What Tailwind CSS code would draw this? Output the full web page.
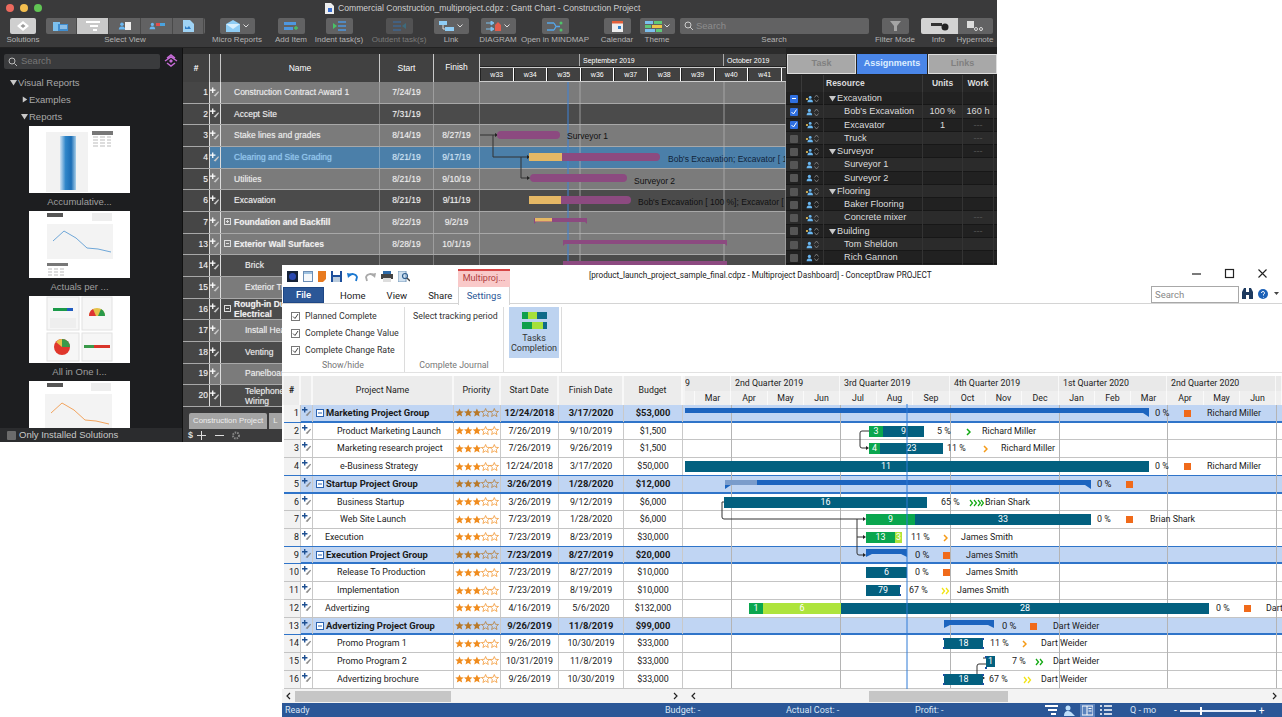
<!DOCTYPE html>
<html><head><meta charset="utf-8"><title>ConceptDraw PROJECT</title>
<script src="https://cdn.jsdelivr.net/npm/@tailwindcss/browser@4"></script></head>
<body class="bg-white">
<svg width="0" height="0" class="absolute">
<defs>
<linearGradient id="gb" x1="0" x2="1" y1="0" y2="0"><stop offset="0" stop-color="#cfe3f4"/><stop offset=".35" stop-color="#2f86c9"/><stop offset=".7" stop-color="#1b6db5"/><stop offset="1" stop-color="#a8cfe9"/></linearGradient>
<symbol id="rd" viewBox="0 0 11 11"><path d="M3 0v6M0 3h6" stroke="#fff" stroke-width="1.400"/><path d="M4 9l5-5 1 1-4 5z" fill="#c8c8c8"/></symbol>
<symbol id="rl" viewBox="0 0 11 11"><path d="M3 0v6M0 3h6" stroke="#1d4f91" stroke-width="1.500"/><path d="M4 9l5-5 1 1-4 5z" fill="#8a8a8a"/></symbol>
<symbol id="st" viewBox="0 0 44 10"><g fill="#f08c1e"><path id="s1" d="M4.500 0.500l1.200 2.800 3 .2-2.300 2 .8 3-2.700-1.600-2.700 1.600.8-3-2.300-2 3-.2z"/><use href="#s1" x="8.700"/><use href="#s1" x="17.400"/></g><g fill="none" stroke="#f08c1e" stroke-width=".7"><use href="#s1" x="26.100"/><use href="#s1" x="34.800"/></g></symbol>
<symbol id="sg" viewBox="0 0 44 10"><g fill="#b8792a"><path id="s2" d="M4.500 0.500l1.200 2.800 3 .2-2.300 2 .8 3-2.700-1.600-2.700 1.600.8-3-2.300-2 3-.2z"/><use href="#s2" x="8.700"/><use href="#s2" x="17.400"/></g><g fill="none" stroke="#b8792a" stroke-width=".7"><use href="#s2" x="26.100"/><use href="#s2" x="34.800"/></g></symbol>
<symbol id="mn" viewBox="0 0 8 8"><rect x=".5" y=".5" width="7" height="7" fill="#fff" stroke="#2a62b0"/><path d="M2 4h4" stroke="#2a62b0"/></symbol>
<symbol id="pr" viewBox="0 0 5 9"><path d="M.5 3.500L2.500 1l2 2.500M.5 5.500l2 2.500 2-2.500" fill="none" stroke="#8a8a8a" stroke-width=".8"/></symbol>
<symbol id="pe" viewBox="0 0 10 10"><circle cx="5.500" cy="3" r="2" fill="#69b7f2"/><path d="M2 9c0-3 2-3.500 3.500-3.500S9 6 9 9z" fill="#69b7f2"/></symbol>
<symbol id="pg" viewBox="0 0 10 10"><circle cx="6.500" cy="3" r="1.800" fill="#69b7f2"/><path d="M3 9c0-3 2-3.500 3.500-3.500S10 6 10 9z" fill="#69b7f2"/><circle cx="2.500" cy="5" r="1.400" fill="#e8c25a"/></symbol>
<symbol id="tm" viewBox="0 0 8 8"><path d="M0 1h8L4 7.500z" fill="#c8c8c8"/></symbol>
<symbol id="ti" viewBox="0 0 8 8"><path d="M1 0v8l6-4z" fill="#c8c8c8"/></symbol>
</defs></svg>

<div class="relative w-[1282px] h-[717px] overflow-hidden bg-white [font-family:'Liberation_Sans',Arial,sans-serif]">

<!-- MAC WINDOW -->
<div class="absolute left-0 top-0 w-[997px] h-[442px] bg-[#1d1e20] flex flex-col overflow-hidden">
  <div class="h-[48px] shrink-0 bg-[#3a3a3b] border-b border-[#222] relative">
    <div class="h-[16px] flex items-center relative">
      <div class="flex gap-[6px] ml-[6px]"><span class="w-[8px] h-[8px] rounded-full bg-[#ec6a5e]"></span><span class="w-[8px] h-[8px] rounded-full bg-[#f4bf4f]"></span><span class="w-[8px] h-[8px] rounded-full bg-[#61c554]"></span></div>
      <svg class="ml-[283px]" width="9" height="11" viewBox="0 0 9 11"><path d="M0 0h6l3 3v8H0z" fill="#eee"/><rect x="3" y="5" width="4" height="4" fill="#3a6fd0"/></svg>
      <div class="ml-[4px] text-[8.600px] text-[#cfcfcf] whitespace-nowrap">Commercial Construction_multiproject.cdpz : Gantt Chart - Construction Project</div>
    </div>
    <div class="flex text-[8px] text-[#b4b4b4] whitespace-nowrap *:flex *:flex-col *:items-center *:h-[30px] *:justify-between">
      <div class="w-[46px]"><div class="w-[26px] h-[16px] mt-[2px] rounded-[2px] bg-[#cfcfcf] flex items-center justify-center"><svg width="12" height="11" viewBox="0 0 12 11"><path d="M6 0l6 5-6 5-6-5z" fill="#fff"/><path d="M6 3l2.500 2-2.500 2-2.500-2z" fill="#999"/></svg></div><span>Solutions</span></div>
      <div class="w-[158px]"><div class="w-[159px] h-[16px] mt-[2px] rounded-[2px] bg-[#626263] flex *:flex-1 *:flex *:items-center *:justify-center *:border-r *:border-[#4a4a4a]">
        <div><svg width="15" height="11" viewBox="0 0 15 11"><rect x="0" y="1" width="7" height="9" fill="#7cc0ee"/><rect x="5" y="3" width="10" height="7" fill="#3f8dd0"/><path d="M7 5h7M7 7h7" stroke="#d9eefc"/></svg></div>
        <div class="bg-[#c9c9c9]"><svg width="14" height="10" viewBox="0 0 14 10"><path d="M0 1h14M4 5h8M7 9h4" stroke="#fff" stroke-width="2"/></svg></div>
        <div><svg width="14" height="10" viewBox="0 0 14 10"><use href="#pe" width="9" height="10"/><rect x="8" y="1" width="6" height="8" fill="#eee"/></svg></div>
        <div><svg width="17" height="10" viewBox="0 0 17 10"><use href="#pe" width="8" height="10"/><rect x="8" y="2" width="4" height="3" fill="#e24b4b"/><rect x="12" y="2" width="5" height="3" fill="#4aa3df"/></svg></div>
        <div class="border-r-0"><svg width="11" height="12" viewBox="0 0 11 12"><path d="M0 0h7l4 4v8H0z" fill="#9fd3f5"/><path d="M2 6l2 2 2-2 2 3H2z" fill="#2f7fc8"/></svg></div>
      </div><span>Select View</span></div>
      <div class="w-[66px]"><div class="w-[35px] h-[16px] mt-[2px] rounded-[2px] bg-[#626263] flex items-center justify-center gap-[3px]"><svg width="14" height="12" viewBox="0 0 14 12"><path d="M0 4l7-4 7 4v8H0z" fill="#8fcdf5"/><path d="M0 4l7 5 7-5" fill="#d8effd"/></svg><svg width="6" height="4" viewBox="0 0 6 4"><path d="M.5.500L3 3 5.500.500" stroke="#ddd" fill="none"/></svg></div><span>Micro Reports</span></div>
      <div class="w-[42px]"><div class="w-[27px] h-[16px] mt-[2px] rounded-[2px] bg-[#626263] flex items-center justify-center"><svg width="14" height="10" viewBox="0 0 14 10"><rect y="1" width="12" height="3" fill="#4e97e0"/><rect y="6" width="9" height="3" fill="#4e97e0"/><path d="M10 7h4M12 5v4" stroke="#49c266" stroke-width="1.300"/></svg></div><span>Add Item</span></div>
      <div class="w-[54px]"><div class="w-[27px] h-[16px] mt-[2px] rounded-[2px] bg-[#626263] flex items-center justify-center"><svg width="13" height="10" viewBox="0 0 13 10"><path d="M0 2l4 3-4 3z" fill="#49c266"/><path d="M5 1h8M5 5h8M5 9h8" stroke="#4e97e0" stroke-width="1.400"/></svg></div><span>Indent task(s)</span></div>
      <div class="w-[66px] text-[#7a7a7a]"><div class="w-[27px] h-[16px] mt-[2px] rounded-[2px] bg-[#525253] flex items-center justify-center"><svg width="13" height="10" viewBox="0 0 13 10"><path d="M13 2L9 5l4 3z" fill="#3d6b7d"/><path d="M0 1h8M0 5h8M0 9h8" stroke="#3f6590" stroke-width="1.400"/></svg></div><span>Outdent task(s)</span></div>
      <div class="w-[38px]"><div class="w-[35px] h-[16px] mt-[2px] rounded-[2px] bg-[#626263] flex items-center justify-center gap-[3px]"><svg width="15" height="10" viewBox="0 0 15 10"><rect width="8" height="4" fill="#8fcdf5"/><rect x="6" y="6" width="9" height="4" fill="#8fcdf5"/><path d="M4 4v4h2" stroke="#ddd" fill="none"/></svg><svg width="6" height="4" viewBox="0 0 6 4"><path d="M.5.500L3 3 5.500.500" stroke="#ddd" fill="none"/></svg></div><span>Link</span></div>
      <div class="w-[56px]"><div class="w-[35px] h-[16px] mt-[2px] rounded-[2px] bg-[#626263] flex items-center justify-center gap-[3px]"><svg width="15" height="11" viewBox="0 0 15 11"><path d="M0 2h6M0 8h6M5 0l3 2-3 2zM5 6l3 2-3 2z" stroke="#7cc0ee" fill="#7cc0ee"/><path d="M9 10V4l3-3 3 3v6z" fill="#e25c4c"/></svg><svg width="6" height="4" viewBox="0 0 6 4"><path d="M.5.500L3 3 5.500.500" stroke="#ddd" fill="none"/></svg></div><span>DIAGRAM</span></div>
      <div class="w-[58px]"><div class="w-[27px] h-[16px] mt-[2px] rounded-[2px] bg-[#626263] flex items-center justify-center"><svg width="16" height="11" viewBox="0 0 16 11"><path d="M0 2h7M0 9h7M7 2l2 3.500-2 3.500M9 5.500h4" stroke="#55a6e8" stroke-width="1.300" fill="none"/><circle cx="14" cy="2" r="1.500" fill="#4fc46a"/><circle cx="14" cy="9" r="1.500" fill="#4fc46a"/></svg></div><span>Open in MINDMAP</span></div>
      <div class="w-[46px] ml-[10px]"><div class="w-[27px] h-[16px] mt-[2px] rounded-[2px] bg-[#626263] flex items-center justify-center"><svg width="11" height="11" viewBox="0 0 11 11"><rect width="11" height="11" fill="#eee"/><rect width="11" height="2.500" fill="#e4603a"/><rect x="6" y="5" width="3" height="3" fill="#2f7fc8"/></svg></div><span>Calendar</span></div>
      <div class="w-[34px]"><div class="w-[35px] h-[16px] mt-[2px] rounded-[2px] bg-[#626263] flex items-center justify-center gap-[2px]"><svg width="17" height="11" viewBox="0 0 17 11"><rect width="8" height="3" fill="#7cc0ee"/><rect x="9" width="8" height="3" fill="#5fc878"/><rect y="4" width="6" height="3" fill="#5fc878"/><rect x="7" y="4" width="10" height="3" fill="#eec548"/><rect y="8" width="10" height="3" fill="#7cc0ee"/><rect x="11" y="8" width="6" height="3" fill="#5fc878"/></svg><svg width="6" height="4" viewBox="0 0 6 4"><path d="M.5.500L3 3 5.500.500" stroke="#ddd" fill="none"/></svg></div><span>Theme</span></div>
      <div class="w-[200px]"><div class="w-[189px] h-[16px] mt-[2px] rounded-[2px] bg-[#626263] flex items-center pl-[4px] gap-[1px] text-[9.500px] text-[#8d8d8d] self-start ml-[6px]"><svg width="11" height="10" viewBox="0 0 11 10"><circle cx="4" cy="4" r="3" stroke="#ccc" fill="none"/><path d="M6 6l3 3" stroke="#ccc"/></svg>Search</div><span>Search</span></div>
      <div class="w-[42px]"><div class="w-[27px] h-[16px] mt-[2px] rounded-[2px] bg-[#626263] flex items-center justify-center"><svg width="11" height="10" viewBox="0 0 11 10"><path d="M0 0h11L7 5v5H4V5z" fill="#a5a5a5"/></svg></div><span>Filter Mode</span></div>
      <div class="w-[42px] items-end!"><div class="w-[37px] h-[16px] mt-[2px] rounded-l-[2px] bg-[#d3d3d3] flex items-center justify-center"><svg width="18" height="9" viewBox="0 0 18 9"><rect y="1" width="11" height="3" fill="#333"/><circle cx="14" cy="5" r="3.500" fill="#222"/></svg></div><span class="mr-[13px]">Info</span></div>
      <div class="w-[34px]"><div class="w-[35px] h-[16px] mt-[2px] rounded-r-[2px] bg-[#626263] flex items-center justify-center"><svg width="16" height="10" viewBox="0 0 16 10"><rect width="7" height="7" fill="#ddd"/><circle cx="9" cy="8" r="1.500" stroke="#ddd" fill="none"/><circle cx="14" cy="8" r="1.500" stroke="#ddd" fill="none"/></svg></div><span>Hypernote</span></div>
    </div>
  </div>

  <div class="flex flex-1 min-h-0">
    <!-- SIDEBAR -->
    <aside class="w-[183px] shrink-0 flex flex-col bg-[#1d1e20] border-r border-[#111] text-[#b0b0b0]">
      <div class="relative h-[20px] mt-[6px]">
        <div class="ml-[4px] w-[156px] h-[15px] rounded-[2px] bg-[#3a3b3d] flex items-center pl-[4px] gap-[3px] text-[9.500px] text-[#777]"><svg width="10" height="10" viewBox="0 0 10 10"><circle cx="4" cy="4" r="3" stroke="#bbb" fill="none"/><path d="M6.500 6.500L9 9" stroke="#bbb"/></svg>Search</div>
        <svg class="absolute left-[164px] top-0" width="14" height="14" viewBox="0 0 14 14" fill="none" stroke="#c56bd6" stroke-width="1.500"><path d="M3 4l4-3 4 3M1 7l6-4 6 4M3 9l4 3 4-3"/><path d="M7 5l2 2-2 2-2-2z" fill="#c56bd6" stroke="none"/></svg>
      </div>
      <div class="flex-1 overflow-hidden text-[9.500px] leading-[17px]">
        <div class="flex items-center gap-[1px] pl-[10px] text-[#a8a8a8]"><svg width="7" height="7"><use href="#tm"/></svg>Visual Reports</div>
        <div class="flex items-center gap-[1px] pl-[22px] text-[#a8a8a8]"><svg width="6" height="7"><use href="#ti"/></svg>Examples</div>
        <div class="flex items-center gap-[1px] pl-[21px] text-[#a8a8a8]"><svg width="7" height="7"><use href="#tm"/></svg>Reports</div>
        <div class="pl-[29px] mt-[1px] flex flex-col *:w-[101px] text-[#9f9f9f]">
          <div class="h-[67px] bg-white"><svg width="101" height="67" viewBox="0 0 101 67"><rect x="17" y="6" width="42" height="60" fill="#f2f2f2"/><rect x="31" y="10" width="16" height="54" fill="url(#gb)"/><rect x="63" y="5" width="21" height="4" fill="#777"/><path d="M64 11h18M64 14h18M64 17h18M64 20h18" stroke="#bbb" stroke-dasharray="5 2"/></svg></div>
          <div class="h-[18px] text-center leading-[17px]">Accumulative...</div>
          <div class="h-[67px] bg-white"><svg width="101" height="67" viewBox="0 0 101 67"><rect x="18" y="13" width="66" height="35" fill="#f3f3f3"/><path d="M24 30l11-10 12 7 11 10 11 1 13 3" stroke="#6fa7d8" fill="none"/><rect x="18" y="2" width="16" height="4" fill="#555"/><rect x="63" y="2" width="20" height="8" fill="#eee"/><rect x="18" y="52" width="21" height="3" fill="#777"/><path d="M19 58h18M19 61h18M19 64h18" stroke="#bbb" stroke-dasharray="4 2"/></svg></div>
          <div class="h-[18px] text-center leading-[17px]">Actuals per ...</div>
          <div class="h-[67px] bg-white"><svg width="101" height="67" viewBox="0 0 101 67"><rect x="18" y="1" width="32" height="33" fill="#f6f6f6" stroke="#e2e2e2"/><rect x="24" y="12" width="20" height="3" fill="#1b9a49"/><rect x="38" y="12" width="6" height="3" fill="#1f5cc0"/><rect x="21" y="22" width="26" height="10" fill="#eee"/><rect x="53" y="1" width="30" height="33" fill="#f6f6f6" stroke="#e2e2e2"/><path d="M60 20a8 8 0 0 1 16 0z" fill="#e5c24a"/><path d="M60 20a8 8 0 0 1 4-7l3 7z" fill="#d33"/><path d="M76 20a8 8 0 0 0-4-7l-3 7z" fill="#2a9a4a"/><rect x="18" y="37" width="32" height="28" fill="#f6f6f6" stroke="#e2e2e2"/><circle cx="33" cy="51" r="8" fill="#e0372c"/><path d="M33 51V43a8 8 0 0 1 8 8z" fill="#3a9a4a"/><path d="M33 51V43a8 8 0 0 0-6 3z" fill="#e5c24a"/><rect x="53" y="37" width="30" height="28" fill="#f6f6f6" stroke="#e2e2e2"/><rect x="55" y="49" width="26" height="3" fill="#d9352b"/><rect x="55" y="49" width="10" height="3" fill="#3a9a4a"/></svg></div>
          <div class="h-[18px] text-center leading-[17px]">All in One I...</div>
          <div class="h-[67px] bg-white"><svg width="101" height="48" viewBox="0 0 101 48"><rect x="18" y="2" width="16" height="4" fill="#555"/><rect x="62" y="2" width="20" height="8" fill="#eee"/><rect x="16" y="13" width="67" height="35" fill="#f3f3f3"/><path d="M22 32l11-10 12 7 11 10 11 1 13 3" stroke="#f2a45e" fill="none"/></svg></div>
        </div>
      </div>
      <div class="h-[14px] shrink-0 bg-[#2b2c2e] flex items-center gap-[3px] pl-[7px] text-[9.500px] text-[#c8c8c8]"><span class="w-[9px] h-[9px] bg-[#6b6b6b] rounded-[1px]"></span>Only Installed Solutions</div>
    </aside>

    <!-- MAC GANTT -->
    <section class="w-[603px] shrink-0 bg-[#2c2c2c] pt-[6px] flex flex-col text-white">
      <div class="grid grid-cols-[27px_11px_159px_54px_46px_1fr] h-[28px] bg-[#414141] text-[8.500px] *:border-r *:border-[#c8c8c8] *:flex *:items-center *:justify-center">
        <div class="font-bold">#</div><div></div><div>Name</div><div>Start</div><div class="pb-[2px]">Finish</div>
        <div class="flex-col! border-r-0! items-stretch! justify-stretch! text-[7px]">
          <div class="h-[13px] flex text-left leading-[13px] border-b border-[#222]"><div class="w-[100px] border-r border-[#aaa]"></div><div class="w-[144px] pl-[3px] border-r border-[#aaa]">September 2019</div><div class="pl-[3px]">October 2019</div></div>
          <div class="h-[15px] flex *:w-[33.500px] *:text-center *:leading-[14px] *:border-r *:border-white *:border-l *:border-l-[#222] border-y border-[#ccc]"><div>w33</div><div>w34</div><div>w35</div><div>w36</div><div>w37</div><div>w38</div><div>w39</div><div>w40</div><div>w41</div></div>
        </div>
      </div>
      <div class="text-[8.500px] [text-shadow:0_0_1px_rgba(255,255,255,0.45)] *:grid *:grid-cols-[27px_11px_159px_54px_46px_1fr] *:h-[21.670px] *:border-b *:border-[#a8a8a8] *:items-center *:*:h-full *:*:flex *:*:items-center *:*:border-r *:*:border-[#ffffff44] text-[#eee]">
        <div class="bg-[#7b7b7b]"><div class="bg-[#464646] justify-end pr-[1px] border-[#ddd]!">1</div><div class="border-[#ddd]!"><svg width="11" height="11"><use href="#rd"/></svg></div><div class="pl-[13px] whitespace-nowrap">Construction Contract Award 1</div><div class="justify-center">7/24/19</div><div></div><div class="border-r-0 relative"></div></div>
        <div class="bg-[#4b4b4b]"><div class="bg-[#464646] justify-end pr-[1px] border-[#ddd]!">2</div><div class="border-[#ddd]!"><svg width="11" height="11"><use href="#rd"/></svg></div><div class="pl-[13px]">Accept Site</div><div class="justify-center">7/31/19</div><div></div><div class="border-r-0 relative"></div></div>
        <div class="bg-[#7b7b7b]"><div class="bg-[#464646] justify-end pr-[1px] border-[#ddd]!">3</div><div class="border-[#ddd]!"><svg width="11" height="11"><use href="#rd"/></svg></div><div class="pl-[13px]">Stake lines and grades</div><div class="justify-center">8/14/19</div><div class="justify-center">8/27/19</div><div class="border-r-0 relative"><span class="absolute left-[87px] top-[5px] z-10 [text-shadow:none] text-[#111]">Surveyor 1</span></div></div>
        <div class="bg-[#4b7fa9]"><div class="bg-[#464646] justify-end pr-[1px] border-[#ddd]!">4</div><div class="border-[#ddd]!"><svg width="11" height="11"><use href="#rd"/></svg></div><div class="pl-[13px] text-[#8cc8f4]">Clearing and Site Grading</div><div class="justify-center text-[#cfe4f5]">8/21/19</div><div class="justify-center text-[#cfe4f5]">9/17/19</div><div class="border-r-0 relative overflow-hidden"><span class="absolute left-[188px] top-[6px] z-10 [text-shadow:none] text-[#10243a] whitespace-nowrap">Bob's Excavation; Excavator [ 1</span></div></div>
        <div class="bg-[#7b7b7b]"><div class="bg-[#464646] justify-end pr-[1px] border-[#ddd]!">5</div><div class="border-[#ddd]!"><svg width="11" height="11"><use href="#rd"/></svg></div><div class="pl-[13px]">Utilities</div><div class="justify-center">8/21/19</div><div class="justify-center">9/10/19</div><div class="border-r-0 relative"><span class="absolute left-[154px] top-[6px] z-10 [text-shadow:none] text-[#111]">Surveyor 2</span></div></div>
        <div class="bg-[#4b4b4b]"><div class="bg-[#464646] justify-end pr-[1px] border-[#ddd]!">6</div><div class="border-[#ddd]!"><svg width="11" height="11"><use href="#rd"/></svg></div><div class="pl-[13px]">Excavation</div><div class="justify-center">8/21/19</div><div class="justify-center">9/11/19</div><div class="border-r-0 relative overflow-hidden"><span class="absolute left-[158px] top-[6px] z-10 [text-shadow:none] text-[#111] whitespace-nowrap">Bob's Excavation [ 100 %]; Excavator [</span></div></div>
        <div class="bg-[#7b7b7b]"><div class="bg-[#464646] justify-end pr-[1px] border-[#ddd]!">7</div><div class="border-[#ddd]!"><svg width="11" height="11"><use href="#rd"/></svg></div><div class="pl-[3px] gap-[2px] font-bold"><svg width="8" height="8"><rect x=".5" y=".5" width="6" height="6" fill="none" stroke="#ddd"/><path d="M2 3.500h3M3.500 2v3" stroke="#ddd"/></svg>Foundation and Backfill</div><div class="justify-center">8/22/19</div><div class="justify-center">9/2/19</div><div class="border-r-0 relative"></div></div>
        <div class="bg-[#7b7b7b]"><div class="bg-[#464646] justify-end pr-[1px] border-[#ddd]!">13</div><div class="border-[#ddd]!"><svg width="11" height="11"><use href="#rd"/></svg></div><div class="pl-[3px] gap-[2px] font-bold"><svg width="8" height="8"><rect x=".5" y=".5" width="6" height="6" fill="none" stroke="#ddd"/><path d="M2 3.500h3" stroke="#ddd"/></svg>Exterior Wall Surfaces</div><div class="justify-center">8/28/19</div><div class="justify-center">10/1/19</div><div class="border-r-0 relative"></div></div>
        <div class="bg-[#4b4b4b]"><div class="bg-[#464646] justify-end pr-[1px] border-[#ddd]!">14</div><div class="border-[#ddd]!"><svg width="11" height="11"><use href="#rd"/></svg></div><div class="pl-[24px]">Brick</div><div class="justify-center"></div><div></div><div class="border-r-0 relative"></div></div>
        <div class="bg-[#7b7b7b]"><div class="bg-[#464646] justify-end pr-[1px] border-[#ddd]!">15</div><div class="border-[#ddd]!"><svg width="11" height="11"><use href="#rd"/></svg></div><div class="pl-[24px]">Exterior Trim</div><div></div><div></div><div class="border-r-0 relative"></div></div>
        <div class="bg-[#4b4b4b]"><div class="bg-[#464646] justify-end pr-[1px] border-[#ddd]!">16</div><div class="border-[#ddd]!"><svg width="11" height="11"><use href="#rd"/></svg></div><div class="pl-[3px] gap-[2px] leading-[10px] font-bold"><svg width="8" height="8"><rect x=".5" y=".5" width="6" height="6" fill="none" stroke="#ddd"/><path d="M2 3.500h3" stroke="#ddd"/></svg><span>Rough-in Duct<br>Electrical</span></div><div></div><div></div><div class="border-r-0 relative"></div></div>
        <div class="bg-[#7b7b7b]"><div class="bg-[#464646] justify-end pr-[1px] border-[#ddd]!">17</div><div class="border-[#ddd]!"><svg width="11" height="11"><use href="#rd"/></svg></div><div class="pl-[24px]">Install Heating</div><div></div><div></div><div class="border-r-0 relative"></div></div>
        <div class="bg-[#4b4b4b]"><div class="bg-[#464646] justify-end pr-[1px] border-[#ddd]!">18</div><div class="border-[#ddd]!"><svg width="11" height="11"><use href="#rd"/></svg></div><div class="pl-[24px]">Venting</div><div></div><div></div><div class="border-r-0 relative"></div></div>
        <div class="bg-[#7b7b7b]"><div class="bg-[#464646] justify-end pr-[1px] border-[#ddd]!">19</div><div class="border-[#ddd]!"><svg width="11" height="11"><use href="#rd"/></svg></div><div class="pl-[24px]">Panelboard</div><div></div><div></div><div class="border-r-0 relative"></div></div>
        <div class="bg-[#4b4b4b]"><div class="bg-[#464646] justify-end pr-[1px] border-[#ddd]!">20</div><div class="border-[#ddd]!"><svg width="11" height="11"><use href="#rd"/></svg></div><div class="pl-[24px] leading-[10px]"><span>Telephone<br>Wiring</span></div><div></div><div></div><div class="border-r-0 relative"></div></div>
      </div>
      <div class="flex-1 bg-[#3b3b3c] pt-[6px] pl-[6px] flex flex-col">
        <div class="flex gap-[2px] h-[16px] text-[7.800px] text-[#eee] items-center"><span class="bg-[#a4a4a4] px-[4px] leading-[16px] whitespace-nowrap rounded-t-[2px]">Construction Project</span><span class="bg-[#a4a4a4] px-[4px] leading-[16px]">L</span></div>
        <div class="flex-1 flex items-center gap-[4px] text-[#ddd] text-[9px] font-bold -ml-[1px]"><span>$</span><svg width="9" height="9"><path d="M4.500 0v9M0 4.500h9" stroke="#ddd"/></svg><svg class="ml-[5px]" width="9" height="9"><path d="M0 4.500h9" stroke="#ddd"/></svg><svg class="ml-[3px]" width="10" height="9" viewBox="0 0 10 9"><circle cx="5" cy="4.500" r="3" fill="none" stroke="#888" stroke-width="2" stroke-dasharray="1.500 1"/></svg></div>
      </div>
    </section>

    <!-- RIGHT PANEL -->
    <section class="w-[211px] shrink-0 bg-[#222] text-[#ddd] text-[9.200px] pt-[6px]">
      <div class="flex gap-px h-[20px] pl-px items-stretch text-[9px] font-bold text-[#808080] *:flex *:items-center *:justify-center *:border *:border-[#ddd]">
        <div class="w-[69px] bg-[#a8a8a8]">Task</div><div class="w-[70px] bg-[#4a86e8] text-[#ddeeff] border-[#4a86e8]!">Assignments</div><div class="w-[69px] bg-[#a8a8a8]">Links</div>
      </div>
      <div class="mt-[1px] h-[17px] grid grid-cols-[16px_22px_99px_40px_31px] bg-[#262626] text-[8.500px] font-bold items-center *:border-r *:border-[#3a3a3a] *:h-full *:flex *:items-center"><div></div><div></div><div class="pl-[2px]">Resource</div><div class="justify-center">Units</div><div class="justify-center">Work</div></div>
      <div class="*:grid *:grid-cols-[16px_22px_99px_40px_31px] *:h-[13.250px] *:items-center *:*:h-full *:*:flex *:*:items-center *:*:border-r *:*:border-[#333] *:even:bg-[#2b2b2b] *:odd:bg-[#212121] *:border-b *:border-[#171717]">
        <div><div class="justify-center"><span class="w-[8px] h-[8px] rounded-[1px] bg-[#2f6fe0] flex items-center justify-center"><span class="w-[4px] h-[1px] bg-white"></span></span></div><div class="gap-[1px] pl-[3px]"><svg width="8" height="8"><use href="#pg"/></svg><svg width="5" height="9"><use href="#pr"/></svg></div><div class="pl-[5px] gap-[1px]"><svg width="7" height="7"><use href="#tm"/></svg>Excavation</div><div></div><div></div></div>
        <div><div class="justify-center"><span class="w-[8px] h-[8px] rounded-[1px] bg-[#2f6fe0] flex items-center justify-center"><svg width="6" height="6" viewBox="0 0 6 6"><path d="M.5 3l2 2L5.500.500" stroke="#fff" fill="none"/></svg></span></div><div class="gap-[1px] pl-[3px]"><svg width="8" height="8"><use href="#pe"/></svg><svg width="5" height="9"><use href="#pr"/></svg></div><div class="pl-[20px]">Bob's Excavation</div><div class="justify-center">100 %</div><div class="justify-center">160 h</div></div>
        <div><div class="justify-center"><span class="w-[8px] h-[8px] rounded-[1px] bg-[#2f6fe0] flex items-center justify-center"><svg width="6" height="6" viewBox="0 0 6 6"><path d="M.5 3l2 2L5.500.500" stroke="#fff" fill="none"/></svg></span></div><div class="gap-[1px] pl-[3px]"><svg width="8" height="8"><use href="#pg"/></svg><svg width="5" height="9"><use href="#pr"/></svg></div><div class="pl-[20px]">Excavator</div><div class="justify-center">1</div><div class="justify-center text-[#555]">---</div></div>
        <div><div class="justify-center"><span class="w-[8px] h-[8px] rounded-[1px] bg-[#555]"></span></div><div class="gap-[1px] pl-[3px]"><svg width="8" height="8"><use href="#pg"/></svg><svg width="5" height="9"><use href="#pr"/></svg></div><div class="pl-[20px]">Truck</div><div></div><div class="justify-center text-[#555]">---</div></div>
        <div><div class="justify-center"><span class="w-[8px] h-[8px] rounded-[1px] bg-[#555]"></span></div><div class="gap-[1px] pl-[3px]"><svg width="8" height="8"><use href="#pg"/></svg><svg width="5" height="9"><use href="#pr"/></svg></div><div class="pl-[5px] gap-[1px]"><svg width="7" height="7"><use href="#tm"/></svg>Surveyor</div><div></div><div class="justify-center text-[#555]">---</div></div>
        <div><div class="justify-center"><span class="w-[8px] h-[8px] rounded-[1px] bg-[#555]"></span></div><div class="gap-[1px] pl-[3px]"><svg width="8" height="8"><use href="#pe"/></svg><svg width="5" height="9"><use href="#pr"/></svg></div><div class="pl-[20px]">Surveyor 1</div><div></div><div></div></div>
        <div><div class="justify-center"><span class="w-[8px] h-[8px] rounded-[1px] bg-[#555]"></span></div><div class="gap-[1px] pl-[3px]"><svg width="8" height="8"><use href="#pe"/></svg><svg width="5" height="9"><use href="#pr"/></svg></div><div class="pl-[20px]">Surveyor 2</div><div></div><div></div></div>
        <div><div class="justify-center"><span class="w-[8px] h-[8px] rounded-[1px] bg-[#555]"></span></div><div class="gap-[1px] pl-[3px]"><svg width="8" height="8"><use href="#pg"/></svg><svg width="5" height="9"><use href="#pr"/></svg></div><div class="pl-[5px] gap-[1px]"><svg width="7" height="7"><use href="#tm"/></svg>Flooring</div><div></div><div></div></div>
        <div><div class="justify-center"><span class="w-[8px] h-[8px] rounded-[1px] bg-[#555]"></span></div><div class="gap-[1px] pl-[3px]"><svg width="8" height="8"><use href="#pe"/></svg><svg width="5" height="9"><use href="#pr"/></svg></div><div class="pl-[20px]">Baker Flooring</div><div></div><div></div></div>
        <div><div class="justify-center"><span class="w-[8px] h-[8px] rounded-[1px] bg-[#555]"></span></div><div class="gap-[1px] pl-[3px]"><svg width="8" height="8"><use href="#pg"/></svg><svg width="5" height="9"><use href="#pr"/></svg></div><div class="pl-[20px]">Concrete mixer</div><div></div><div class="justify-center text-[#555]">---</div></div>
        <div><div class="justify-center"><span class="w-[8px] h-[8px] rounded-[1px] bg-[#555]"></span></div><div class="gap-[1px] pl-[3px]"><svg width="8" height="8"><use href="#pg"/></svg><svg width="5" height="9"><use href="#pr"/></svg></div><div class="pl-[5px] gap-[1px]"><svg width="7" height="7"><use href="#tm"/></svg>Building</div><div></div><div class="justify-center text-[#555]">---</div></div>
        <div><div class="justify-center"><span class="w-[8px] h-[8px] rounded-[1px] bg-[#555]"></span></div><div class="gap-[1px] pl-[3px]"><svg width="8" height="8"><use href="#pe"/></svg><svg width="5" height="9"><use href="#pr"/></svg></div><div class="pl-[20px]">Tom Sheldon</div><div></div><div></div></div>
        <div><div class="justify-center"><span class="w-[8px] h-[8px] rounded-[1px] bg-[#555]"></span></div><div class="gap-[1px] pl-[3px]"><svg width="8" height="8"><use href="#pe"/></svg><svg width="5" height="9"><use href="#pr"/></svg></div><div class="pl-[20px]">Rich Gannon</div><div></div><div></div></div>
      </div>
    </section>
  </div>

  <!-- mac gantt graphics over the chart -->
  <svg class="absolute left-0 top-0 pointer-events-none" width="997" height="442" viewBox="0 0 997 442">
    <path d="M568 82V265" stroke="#3f83d8"/><path d="M580 82V265M724 82V265" stroke="#b5b5b5" opacity=".75"/>
    <path d="M480 135H495M493 135V157H527M521 157V178H527" stroke="#333" fill="none"/>
    <path d="M498 135l-3-2v4zM530 157l-3-2v4zM530 178l-3-2v4z" fill="#222"/>
    <rect x="497" y="131" width="63" height="8" rx="4" fill="#8c4a80"/>
    <rect x="529" y="153" width="131" height="8" rx="4" fill="#8c4a80"/><rect x="529" y="153" width="33" height="8" fill="#e5b865"/>
    <rect x="530" y="174" width="97" height="8" rx="4" fill="#8c4a80"/>
    <rect x="529" y="196" width="102" height="8" rx="4" fill="#8c4a80"/><rect x="529" y="196" width="32" height="8" fill="#e5b865"/>
    <path d="M534 218h53v6l-2-2h-49l-2 2z" fill="#8c4a80"/><rect x="535" y="218" width="17" height="3.500" fill="#e5b865"/>
    <path d="M563 240h164v6l-2-2H565l-2 2z" fill="#8c4a80"/>
    <rect x="563" y="261" width="164" height="4" fill="#8c4a80"/>
  </svg>
</div>

<!-- WINDOWS WINDOW -->
<div class="absolute left-[282px] top-[265px] z-10 w-[1000px] h-[452px] bg-white flex flex-col text-[#1a1a1a] [font-family:'Roboto','Noto_Sans',sans-serif] text-[9px]">
  <div class="h-[22px] flex items-center relative shrink-0 pl-[5px] gap-[5px]">
    <svg width="11" height="11" viewBox="0 0 11 11"><rect width="11" height="11" fill="#152238"/><circle cx="5.500" cy="5.500" r="3.500" fill="#2a48b0"/></svg>
    <svg width="10" height="11" viewBox="0 0 10 11"><rect x=".5" y=".5" width="9" height="10" fill="#f3f7fb" stroke="#6b8db5"/><rect x="1" y="1" width="8" height="2" fill="#9cc0e0"/></svg>
    <svg width="8" height="11" viewBox="0 0 8 11"><path d="M0 0h8v8l-3 3H0z" fill="#e87a1e"/></svg>
    <svg width="11" height="11" viewBox="0 0 11 11"><rect width="11" height="11" fill="#1d4f9c"/><rect x="2" y="0" width="7" height="4" fill="#fff"/><rect x="2" y="6" width="7" height="5" fill="#bcd"/></svg>
    <svg width="12" height="11" viewBox="0 0 12 11"><path d="M2 5a4.500 4.500 0 0 1 8 1l-1 4" stroke="#1b78d0" stroke-width="1.800" fill="none"/><path d="M0 2l5 1-4 4z" fill="#1b78d0"/></svg>
    <svg width="12" height="11" viewBox="0 0 12 11"><path d="M10 5a4.500 4.500 0 0 0-8 1l1 4" stroke="#a9a9a9" stroke-width="1.800" fill="none"/><path d="M12 2L7 3l4 4z" fill="#a9a9a9"/></svg>
    <svg width="12" height="11" viewBox="0 0 12 11"><rect x="2" y="0" width="8" height="4" fill="#2d6aa8"/><rect y="3" width="12" height="5" fill="#444"/><rect x="2" y="7" width="8" height="4" fill="#ddd"/></svg>
    <svg width="12" height="11" viewBox="0 0 12 11"><rect width="8" height="11" fill="#cfe0ef" stroke="#7a9cbc"/><circle cx="7" cy="5" r="2.500" fill="none" stroke="#2f5f90" stroke-width="1.200"/><path d="M9 7l3 3" stroke="#444" stroke-width="1.400"/></svg>
    <div class="absolute left-[307px] top-[4px] text-[8.200px] whitespace-nowrap">[product_launch_project_sample_final.cdpz - Multiproject Dashboard] - ConceptDraw PROJECT</div>
    <div class="absolute left-[176px] top-[4px] w-[52px] h-[18px] bg-[#f9c9c9] border-t-[2px] border-[#d64545] text-[#b04040] text-[9px] text-center leading-[15px]">Multiproj...</div>
    <div class="absolute left-[909px] top-[3px] flex items-center gap-[22px]">
      <svg width="11" height="11" viewBox="0 0 11 11"><path d="M1 6h9" stroke="#222" stroke-width="1.200"/></svg>
      <svg width="11" height="11" viewBox="0 0 11 11"><rect x="1.500" y="1.500" width="8" height="8" fill="none" stroke="#222" stroke-width="1.200"/></svg>
      <svg width="11" height="11" viewBox="0 0 11 11"><path d="M1.500 1.500l8 8M9.500 1.500l-8 8" stroke="#222" stroke-width="1.100"/></svg>
    </div>
  </div>
  <div class="h-[17px] flex relative items-stretch shrink-0 text-[9.500px] border-b border-[#d4d4d4]">
    <div class="w-[41px] ml-[1px] bg-[#2b5797] text-white flex items-center justify-center font-medium border border-[#1e4785]">File</div>
    <span class="ml-[16px] leading-[17px]">Home</span>
    <span class="ml-[21px] leading-[17px]">View</span>
    <span class="ml-[21px] leading-[17px]">Share</span>
    <div class="absolute left-[176px] top-0 w-[52px] h-[18px] bg-white border-x border-[#d4d4d4] text-[#2b5797] text-center leading-[17px] z-[1]">Settings</div>
    <div class="absolute left-[869px] -top-[1px] w-[88px] h-[17px] border border-[#a8a8a8] text-[#888] leading-[15px] pl-[3px]">Search</div>
    <svg class="absolute left-[959px] top-0" width="13" height="14" viewBox="0 0 13 14"><path d="M1 5l2-4h2v4h3V1h2l2 4v7H8V8H5v4H1z" fill="#1d3a5f"/></svg>
    <svg class="absolute left-[976px] top-[2px]" width="10" height="10" viewBox="0 0 10 10"><circle cx="5" cy="5" r="5" fill="#1d62b8"/><path d="M3.500 4a1.500 1.500 0 1 1 2 1.400V6.500M5.500 8v.500" stroke="#fff" fill="none"/></svg>
    <svg class="absolute left-[992px] top-[5px]" width="5" height="3" viewBox="0 0 5 3"><path d="M0 0h5L2.500 3z" fill="#444"/></svg>
  </div>
  <div class="h-[69px] shrink-0 flex pt-[3px] border-b border-[#e2e2e2] text-[8.800px] text-[#333]">
    <div class="w-[123px] border-r border-[#dcdcdc] flex flex-col pl-[9px] relative whitespace-nowrap">
      <div class="h-[17px] mt-[1px] flex items-center gap-[5px]"><span class="w-[9px] h-[9px] border border-[#777] flex items-center justify-center"><svg width="7" height="7" viewBox="0 0 7 7"><path d="M1 3.500l2 2L6 1" stroke="#444" fill="none"/></svg></span>Planned Complete</div>
      <div class="h-[17px] flex items-center gap-[5px]"><span class="w-[9px] h-[9px] border border-[#777] flex items-center justify-center"><svg width="7" height="7" viewBox="0 0 7 7"><path d="M1 3.500l2 2L6 1" stroke="#444" fill="none"/></svg></span>Complete Change Value</div>
      <div class="h-[17px] flex items-center gap-[5px]"><span class="w-[9px] h-[9px] border border-[#777] flex items-center justify-center"><svg width="7" height="7" viewBox="0 0 7 7"><path d="M1 3.500l2 2L6 1" stroke="#444" fill="none"/></svg></span>Complete Change Rate</div>
      <div class="absolute left-0 right-0 bottom-0 text-center text-[8.800px] text-[#777]">Show/hide</div>
    </div>
    <div class="w-[99px] border-r border-[#dcdcdc] relative"><div class="pl-[8px] mt-[1px] leading-[17px] whitespace-nowrap">Select tracking period</div><div class="absolute left-0 right-0 bottom-0 text-center text-[8.800px] text-[#777]">Complete Journal</div></div>
    <div class="w-[58px] border-r border-[#dcdcdc] pl-[5px]">
      <div class="w-[50px] h-[51px] bg-[#bdd3f0] flex flex-col items-center pt-[5px] text-center leading-[10px] text-[9px]">
        <svg width="25" height="17" viewBox="0 0 25 17"><rect y="0" width="6" height="7" fill="#10a04c"/><rect x="6" width="9" height="7" fill="#a6e03a"/><rect x="15" width="10" height="7" fill="#0f6a88"/><rect y="10" width="10" height="7" fill="#10a04c"/><rect x="10" y="10" width="11" height="7" fill="#a6e03a"/><rect x="21" y="10" width="4" height="7" fill="#0f6a88"/></svg>
        <span class="mt-[4px]">Tasks<br>Completion</span>
      </div>
    </div>
  </div>
  <div class="h-[3px] shrink-0"></div>

  <!-- header -->
  <div class="h-[29px] shrink-0 flex pl-[2px] bg-[#f4f4f4] text-[8.800px] text-[#222]">
    <div class="w-[399px] grid grid-cols-[17px_12px_141px_47px_58px_65px_59px] *:bg-[#ececec] *:border-r-[2px] *:border-[#f8f8f8] *:flex *:items-center *:justify-center">
      <div class="font-bold">#</div><div></div><div>Project Name</div><div>Priority</div><div>Start Date</div><div>Finish Date</div><div>Budget</div>
    </div>
    <div class="ml-[2px] flex-1 overflow-hidden">
      <div class="h-[15px] flex *:bg-[#e9e9e9] *:border-r *:border-[#f8f8f8] *:pl-[4px] *:leading-[15px] *:whitespace-nowrap">
        <div class="w-[46px] pl-0!">9</div><div class="w-[109px]">2nd Quarter 2019</div><div class="w-[110px]">3rd Quarter 2019</div><div class="w-[109px]">4th Quarter 2019</div><div class="w-[108px]">1st Quarter 2020</div><div class="w-[109px]">2nd Quarter 2020</div><div class="w-[6px]"></div>
      </div>
      <div class="h-[14px] flex *:bg-[#efefef] *:border-r *:border-[#fafafa] *:text-center *:leading-[14px]">
        <div class="w-[10px]"></div><div class="w-[36px]">Mar</div><div class="w-[37px]">Apr</div><div class="w-[36px]">May</div><div class="w-[36px]">Jun</div><div class="w-[37px]">Jul</div><div class="w-[36px]">Aug</div><div class="w-[37px]">Sep</div><div class="w-[36px]">Oct</div><div class="w-[36px]">Nov</div><div class="w-[37px]">Dec</div><div class="w-[36px]">Jan</div><div class="w-[36px]">Feb</div><div class="w-[36px]">Mar</div><div class="w-[37px]">Apr</div><div class="w-[36px]">May</div><div class="w-[36px]">Jun</div><div class="w-[6px]"></div>
      </div>
    </div>
  </div>

  <!-- rows -->
  <div class="h-[284px] shrink-0 pl-[2px] relative overflow-hidden text-[8.900px] *:grid *:grid-cols-[17px_12px_141px_47px_58px_65px_59px_1fr] *:h-[17.730px] *:*:h-full *:*:leading-[16.500px] *:*:text-center *:*:border-r *:*:border-[#c9c9c9] *:border-b *:border-[#c4c4c4] *:whitespace-nowrap">
    <div class="border-b-[2px]! border-[#2f74c9]! bg-[#c0d5f3] text-[9.400px]"><div class="bg-[#f2f2f2] text-right! pr-[1px]">1</div><div><svg class="ml-px mt-[2px]" width="10" height="10"><use href="#rl"/></svg></div><div class="text-left! pl-[3px] font-bold flex items-center gap-[2px]"><svg class="shrink-0" width="8" height="8"><use href="#mn"/></svg>Marketing Project Group</div><div class="flex items-center justify-center"><svg width="44" height="10"><use href="#sg"/></svg></div><div class="font-bold">12/24/2018</div><div class="font-bold">3/17/2020</div><div class="font-bold">$53,000</div><div class="relative ml-[2px] border-r-0!">
      <span class="absolute left-0 top-[3px] w-[464px] h-[5px] bg-[#1c64bf] z-10"></span><span class="absolute left-[470px] z-10">0 %</span><span class="absolute left-[499px] top-[5px] w-[7px] h-[7px] bg-[#f06a1a] z-10"></span><span class="absolute left-[522px] z-10 text-[8.900px]">Richard Miller</span></div></div>
    <div><div class="bg-[#f2f2f2] text-right! pr-[1px]">2</div><div><svg class="ml-px mt-[2px]" width="10" height="10"><use href="#rl"/></svg></div><div class="text-left! pl-[24px]">Product Marketing Launch</div><div class="flex items-center justify-center"><svg width="44" height="10"><use href="#st"/></svg></div><div>7/26/2019</div><div>9/10/2019</div><div>$1,500</div><div class="relative ml-[2px] border-r-0!">
      <div class="absolute left-[184px] top-[3px] h-[11px] w-[55px] bg-[#03607f] z-10 flex text-white leading-[11px]"><span class="w-[14px] bg-[#0aa64e]">3</span><span class="flex-1">9</span></div><span class="absolute left-[252px] z-10">5 %</span><svg class="absolute left-[281px] top-[5px] z-10" width="5" height="8" viewBox="0 0 5 8"><path d="M1 1l3 3-3 3" stroke="#12a812" stroke-width="1.500" fill="none"/></svg><span class="absolute left-[297px] z-10">Richard Miller</span></div></div>
    <div><div class="bg-[#f2f2f2] text-right! pr-[1px]">3</div><div><svg class="ml-px mt-[2px]" width="10" height="10"><use href="#rl"/></svg></div><div class="text-left! pl-[24px]">Marketing research project</div><div class="flex items-center justify-center"><svg width="44" height="10"><use href="#st"/></svg></div><div>7/26/2019</div><div>9/26/2019</div><div>$1,500</div><div class="relative ml-[2px] border-r-0!">
      <div class="absolute left-[184px] top-[3px] h-[11px] w-[74px] bg-[#03607f] z-10 flex text-white leading-[11px]"><span class="w-[11px] bg-[#0aa64e]">4</span><span class="flex-1">23</span></div><span class="absolute left-[262px] z-10">11 %</span><svg class="absolute left-[298px] top-[5px] z-10" width="5" height="8" viewBox="0 0 5 8"><path d="M1 1l3 3-3 3" stroke="#f59a16" stroke-width="1.500" fill="none"/></svg><span class="absolute left-[316px] z-10">Richard Miller</span></div></div>
    <div class="border-[#2f74c9]!"><div class="bg-[#f2f2f2] text-right! pr-[1px]">4</div><div><svg class="ml-px mt-[2px]" width="10" height="10"><use href="#rl"/></svg></div><div class="text-left! pl-[27px]">e-Business Strategy</div><div class="flex items-center justify-center"><svg width="44" height="10"><use href="#st"/></svg></div><div>12/24/2018</div><div>3/17/2020</div><div>$50,000</div><div class="relative ml-[2px] border-r-0!">
      <div class="absolute left-0 top-[3px] h-[11px] w-[464px] bg-[#03607f] z-10 text-white leading-[11px] pl-[196px] text-left">11</div><span class="absolute left-[470px] z-10">0 %</span><span class="absolute left-[499px] top-[5px] w-[7px] h-[7px] bg-[#f06a1a] z-10"></span><span class="absolute left-[522px] z-10">Richard Miller</span></div></div>
    <div class="border-b-[2px]! border-[#2f74c9]! bg-[#c0d5f3] text-[9.400px]"><div class="bg-[#f2f2f2] text-right! pr-[1px]">5</div><div><svg class="ml-px mt-[2px]" width="10" height="10"><use href="#rl"/></svg></div><div class="text-left! pl-[3px] font-bold flex items-center gap-[2px]"><svg class="shrink-0" width="8" height="8"><use href="#mn"/></svg>Startup Project Group</div><div class="flex items-center justify-center"><svg width="44" height="10"><use href="#sg"/></svg></div><div class="font-bold">3/26/2019</div><div class="font-bold">1/28/2020</div><div class="font-bold">$12,000</div><div class="relative ml-[2px] border-r-0!">
      <div class="absolute left-[40px] top-[4px] w-[366px] h-[5px] bg-[#1c64bf] z-10"><span class="block w-[32px] h-full bg-[#7a9ccb]"></span></div><span class="absolute left-[412px] z-10">0 %</span><span class="absolute left-[441px] top-[5px] w-[7px] h-[7px] bg-[#f06a1a] z-10"></span></div></div>
    <div><div class="bg-[#f2f2f2] text-right! pr-[1px]">6</div><div><svg class="ml-px mt-[2px]" width="10" height="10"><use href="#rl"/></svg></div><div class="text-left! pl-[24px]">Business Startup</div><div class="flex items-center justify-center"><svg width="44" height="10"><use href="#st"/></svg></div><div>3/26/2019</div><div>9/12/2019</div><div>$6,000</div><div class="relative ml-[2px] border-r-0!">
      <div class="absolute left-[39px] top-[3px] h-[11px] w-[203px] bg-[#03607f] z-10 text-white leading-[11px] text-center">16</div><span class="absolute left-[256px] z-10">65 %</span><svg class="absolute left-[284px] top-[5px] z-10" width="15" height="8" viewBox="0 0 15 8"><path d="M1 1l2.500 3L1 7M5 1l2.500 3L5 7M9 1l2.500 3L9 7M12 1l2.500 3L12 7" stroke="#12a812" stroke-width="1.200" fill="none"/></svg><span class="absolute left-[300px] z-10">Brian Shark</span></div></div>
    <div><div class="bg-[#f2f2f2] text-right! pr-[1px]">7</div><div><svg class="ml-px mt-[2px]" width="10" height="10"><use href="#rl"/></svg></div><div class="text-left! pl-[27px]">Web Site Launch</div><div class="flex items-center justify-center"><svg width="44" height="10"><use href="#st"/></svg></div><div>7/23/2019</div><div>1/28/2020</div><div>$6,000</div><div class="relative ml-[2px] border-r-0!">
      <div class="absolute left-[181px] top-[3px] h-[11px] w-[225px] bg-[#03607f] z-10 flex text-white leading-[11px]"><span class="w-[49px] bg-[#0aa64e]">9</span><span class="flex-1">33</span></div><span class="absolute left-[412px] z-10">0 %</span><span class="absolute left-[441px] top-[5px] w-[7px] h-[7px] bg-[#f06a1a] z-10"></span><span class="absolute left-[465px] z-10">Brian Shark</span></div></div>
    <div class="border-[#2f74c9]!"><div class="bg-[#f2f2f2] text-right! pr-[1px]">8</div><div><svg class="ml-px mt-[2px]" width="10" height="10"><use href="#rl"/></svg></div><div class="text-left! pl-[12px]">Execution</div><div class="flex items-center justify-center"><svg width="44" height="10"><use href="#st"/></svg></div><div>7/23/2019</div><div>8/23/2019</div><div>$30,000</div><div class="relative ml-[2px] border-r-0!">
      <div class="absolute left-[181px] top-[3px] h-[11px] w-[36px] z-10 flex text-white leading-[11px]"><span class="w-[29px] bg-[#0aa64e]">13</span><span class="flex-1 bg-[#aee43c]">3</span></div><span class="absolute left-[226px] z-10">11 %</span><svg class="absolute left-[258px] top-[5px] z-10" width="5" height="8" viewBox="0 0 5 8"><path d="M1 1l3 3-3 3" stroke="#f59a16" stroke-width="1.500" fill="none"/></svg><span class="absolute left-[276px] z-10">James Smith</span></div></div>
    <div class="border-b-[2px]! border-[#2f74c9]! bg-[#c0d5f3] text-[9.400px]"><div class="bg-[#f2f2f2] text-right! pr-[1px]">9</div><div><svg class="ml-px mt-[2px]" width="10" height="10"><use href="#rl"/></svg></div><div class="text-left! pl-[3px] font-bold flex items-center gap-[2px]"><svg class="shrink-0" width="8" height="8"><use href="#mn"/></svg>Execution Project Group</div><div class="flex items-center justify-center"><svg width="44" height="10"><use href="#sg"/></svg></div><div class="font-bold">7/23/2019</div><div class="font-bold">8/27/2019</div><div class="font-bold">$20,000</div><div class="relative ml-[2px] border-r-0!">
      <span class="absolute left-[181px] top-[2px] w-[41px] h-[5px] bg-[#1c64bf] z-10"></span><span class="absolute left-[230px] z-10">0 %</span><span class="absolute left-[258px] top-[5px] w-[7px] h-[7px] bg-[#f06a1a] z-10"></span><span class="absolute left-[281px] z-10 text-[8.900px]">James Smith</span></div></div>
    <div><div class="bg-[#f2f2f2] text-right! pr-[1px]">10</div><div><svg class="ml-px mt-[2px]" width="10" height="10"><use href="#rl"/></svg></div><div class="text-left! pl-[24px]">Release To Production</div><div class="flex items-center justify-center"><svg width="44" height="10"><use href="#st"/></svg></div><div>7/23/2019</div><div>8/27/2019</div><div>$10,000</div><div class="relative ml-[2px] border-r-0!">
      <div class="absolute left-[181px] top-[3px] h-[11px] w-[41px] bg-[#03607f] z-10 text-white leading-[11px] text-center">6</div><span class="absolute left-[230px] z-10">0 %</span><span class="absolute left-[258px] top-[5px] w-[7px] h-[7px] bg-[#f06a1a] z-10"></span><span class="absolute left-[281px] z-10">James Smith</span></div></div>
    <div><div class="bg-[#f2f2f2] text-right! pr-[1px]">11</div><div><svg class="ml-px mt-[2px]" width="10" height="10"><use href="#rl"/></svg></div><div class="text-left! pl-[24px]">Implementation</div><div class="flex items-center justify-center"><svg width="44" height="10"><use href="#st"/></svg></div><div>7/23/2019</div><div>8/19/2019</div><div>$10,000</div><div class="relative ml-[2px] border-r-0!">
      <div class="absolute left-[181px] top-[3px] h-[11px] w-[34px] bg-[#03607f] z-10 text-white leading-[11px] text-center">79</div><span class="absolute left-[224px] z-10">67 %</span><svg class="absolute left-[256px] top-[5px] z-10" width="9" height="8" viewBox="0 0 9 8"><path d="M1 1l2.500 3L1 7M5 1l2.500 3L5 7" stroke="#f2e414" stroke-width="1.300" fill="none"/></svg><span class="absolute left-[272px] z-10">James Smith</span></div></div>
    <div><div class="bg-[#f2f2f2] text-right! pr-[1px]">12</div><div><svg class="ml-px mt-[2px]" width="10" height="10"><use href="#rl"/></svg></div><div class="text-left! pl-[12px]">Advertizing</div><div class="flex items-center justify-center"><svg width="44" height="10"><use href="#st"/></svg></div><div>4/16/2019</div><div>5/6/2020</div><div>$132,000</div><div class="relative ml-[2px] border-r-0!">
      <div class="absolute left-[64px] top-[3px] h-[11px] w-[460px] bg-[#03607f] z-10 flex text-white leading-[11px]"><span class="w-[14px] bg-[#0aa64e]">1</span><span class="w-[78px] bg-[#aee43c]">6</span><span class="flex-1">28</span></div><span class="absolute left-[531px] z-10">0 %</span><span class="absolute left-[559px] top-[5px] w-[7px] h-[7px] bg-[#f06a1a] z-10"></span><span class="absolute left-[581px] z-10">Dart</span></div></div>
    <div class="border-b-[2px]! border-[#2f74c9]! bg-[#c0d5f3] text-[9.400px]"><div class="bg-[#f2f2f2] text-right! pr-[1px]">13</div><div><svg class="ml-px mt-[2px]" width="10" height="10"><use href="#rl"/></svg></div><div class="text-left! pl-[3px] font-bold flex items-center gap-[2px]"><svg class="shrink-0" width="8" height="8"><use href="#mn"/></svg>Advertizing Project Group</div><div class="flex items-center justify-center"><svg width="44" height="10"><use href="#sg"/></svg></div><div class="font-bold">9/26/2019</div><div class="font-bold">11/8/2019</div><div class="font-bold">$99,000</div><div class="relative ml-[2px] border-r-0!">
      <span class="absolute left-[259px] top-[2px] w-[50px] h-[5px] bg-[#1c64bf] z-10"></span><span class="absolute left-[317px] z-10">0 %</span><span class="absolute left-[345px] top-[5px] w-[7px] h-[7px] bg-[#f06a1a] z-10"></span><span class="absolute left-[368px] z-10 text-[8.900px]">Dart Weider</span></div></div>
    <div><div class="bg-[#f2f2f2] text-right! pr-[1px]">14</div><div><svg class="ml-px mt-[2px]" width="10" height="10"><use href="#rl"/></svg></div><div class="text-left! pl-[24px]">Promo Program 1</div><div class="flex items-center justify-center"><svg width="44" height="10"><use href="#st"/></svg></div><div>9/26/2019</div><div>10/30/2019</div><div>$33,000</div><div class="relative ml-[2px] border-r-0!">
      <div class="absolute left-[259px] top-[3px] h-[11px] w-[39px] bg-[#03607f] z-10 text-white leading-[11px] text-center">18</div><span class="absolute left-[305px] z-10">11 %</span><svg class="absolute left-[337px] top-[5px] z-10" width="5" height="8" viewBox="0 0 5 8"><path d="M1 1l3 3-3 3" stroke="#f59a16" stroke-width="1.500" fill="none"/></svg><span class="absolute left-[356px] z-10">Dart Weider</span></div></div>
    <div><div class="bg-[#f2f2f2] text-right! pr-[1px]">15</div><div><svg class="ml-px mt-[2px]" width="10" height="10"><use href="#rl"/></svg></div><div class="text-left! pl-[24px]">Promo Program 2</div><div class="flex items-center justify-center"><svg width="44" height="10"><use href="#st"/></svg></div><div>10/31/2019</div><div>11/8/2019</div><div>$33,000</div><div class="relative ml-[2px] border-r-0!">
      <div class="absolute left-[301px] top-[3px] h-[11px] w-[9px] bg-[#03607f] z-10 text-white leading-[11px] text-center">1</div><span class="absolute left-[327px] z-10">7 %</span><svg class="absolute left-[350px] top-[5px] z-10" width="9" height="8" viewBox="0 0 9 8"><path d="M1 1l2.500 3L1 7M5 1l2.500 3L5 7" stroke="#12a812" stroke-width="1.300" fill="none"/></svg><span class="absolute left-[368px] z-10">Dart Weider</span></div></div>
    <div><div class="bg-[#f2f2f2] text-right! pr-[1px]">16</div><div><svg class="ml-px mt-[2px]" width="10" height="10"><use href="#rl"/></svg></div><div class="text-left! pl-[24px]">Advertizing brochure</div><div class="flex items-center justify-center"><svg width="44" height="10"><use href="#st"/></svg></div><div>9/26/2019</div><div>10/30/2019</div><div>$33,000</div><div class="relative ml-[2px] border-r-0!">
      <div class="absolute left-[259px] top-[3px] h-[11px] w-[39px] bg-[#03607f] z-10 text-white leading-[11px] text-center">18</div><span class="absolute left-[304px] z-10">67 %</span><svg class="absolute left-[338px] top-[5px] z-10" width="9" height="8" viewBox="0 0 9 8"><path d="M1 1l2.500 3L1 7M5 1l2.500 3L5 7" stroke="#f2e414" stroke-width="1.300" fill="none"/></svg><span class="absolute left-[356px] z-10">Dart Weider</span></div></div>
  </div>

  <!-- scrollbars + status -->
  <div class="h-[14px] shrink-0 flex items-center bg-[#f3f3f3] text-[#333]">
    <div class="w-[401px] flex items-center pl-[4px]"><svg width="5" height="8" viewBox="0 0 5 8"><path d="M4 1L1 4l3 3" stroke="#222" fill="none" stroke-width="1.200"/></svg><div class="ml-[4px] w-[156px] h-[11px] bg-[#c6c6c6]"></div><svg class="ml-[222px]" width="5" height="8" viewBox="0 0 5 8"><path d="M1 1l3 3-3 3" stroke="#222" fill="none" stroke-width="1.200"/></svg></div>
    <div class="flex-1 flex items-center pl-[8px]"><svg width="5" height="8" viewBox="0 0 5 8"><path d="M4 1L1 4l3 3" stroke="#222" fill="none" stroke-width="1.200"/></svg><div class="ml-[173px] w-[139px] h-[11px] bg-[#c6c6c6]"></div><svg class="ml-[264px]" width="5" height="8" viewBox="0 0 5 8"><path d="M1 1l3 3-3 3" stroke="#222" fill="none" stroke-width="1.200"/></svg></div>
  </div>
  <div class="flex-1 bg-[#2b5797] text-[#dbe6f5] flex items-center pl-[3px] text-[9px] relative whitespace-nowrap">
    <span class="w-[380px]">Ready</span><span class="w-[121px]">Budget: -</span><span class="w-[129px]">Actual Cost: -</span><span class="w-[130px]">Profit: -</span>
    <div class="flex items-center gap-[5px] w-[85px]">
      <svg width="13" height="11" viewBox="0 0 13 11"><path d="M0 1h13M3 5h9M6 9h5" stroke="#fff" stroke-width="2"/></svg>
      <svg width="12" height="12" viewBox="0 0 12 12"><circle cx="5" cy="3" r="2.500" fill="#bfe0fb"/><path d="M1 11c0-4 2-5 4-5s3 1 4 2l3 3z" fill="#bfe0fb"/></svg>
      <span class="w-[15px] h-[14px] bg-[#5a82bd] flex items-center justify-center"><svg width="11" height="11" viewBox="0 0 11 11"><path d="M0 1h11v9H0z" fill="none" stroke="#fff"/><path d="M5 1v9" stroke="#fff"/><path d="M6.500 3.500h3M6.500 6h3" stroke="#fff"/></svg></span>
      <svg width="12" height="11" viewBox="0 0 12 11"><path d="M4 1h8M4 5h8M4 9h8" stroke="#fff" stroke-width="1.400"/><path d="M0 1h2M0 5h2M0 9h2" stroke="#fff" stroke-width="1.400"/></svg>
    </div>
    <span class="w-[44px]">Q - mo</span>
    <div class="flex items-center text-white gap-[3px]"><span class="text-[10px]">-</span><div class="relative w-[76px] h-[2px] bg-[#e6eef9]"><span class="absolute left-[20px] -top-[3px] w-[2px] h-[8px] bg-white"></span></div><span class="text-[10px]">+</span></div>
  </div>

  <!-- chart graphics over rows -->
  <svg class="absolute left-0 top-0 pointer-events-none z-[5]" width="1000" height="452" viewBox="282 265 1000 452">
    <path d="M731.500 405V688M840.500 405V688M950.500 405V688M1059.500 405V688M1167.500 405V688M1276.500 405V688" stroke="#b4b4b4"/>
    <path d="M869 431H862a2 2 0 0 0-2 2V446a2 2 0 0 0 2 2H866M724 502H722V517a2 2 0 0 0 2 2H863M857 519V553a2 2 0 0 0 2 2H863M857 537H863M983 658H986a1 1 0 0 1 1 1V664H979a2 2 0 0 0-2 2V676a2 2 0 0 0 2 2H982" stroke="#333" fill="none"/>
    <path d="M869 448l-3-2v4zM866 519l-3-2v4zM866 537l-3-2v4zM866 555l-3-2v4zM985 678l-3-2v4z" fill="#222"/>
  </svg>
  <svg class="absolute left-0 top-0 pointer-events-none z-20" width="1000" height="452" viewBox="282 265 1000 452">
    <path d="M1143 413h6v4zM725 485h6l-6 4zM1091 485h-6l6 4zM866 554h6l-6 3zM907 554h-6l6 3zM944 625h6l-6 3zM994 625h-6l6 3z" fill="#1c64bf"/>
    <path d="M944 638v2M944 647v2M983 638v2M983 647v2M986 656v2M986 667v2M944 674v2M944 683v2M983 674v2M983 683v2M900 585v2M900 594v2" stroke="#1d4fa0" stroke-width="2"/>
    <path d="M907 404V689" stroke="#2e7ad6"/>
  </svg>
</div>
</div>
</body></html>
